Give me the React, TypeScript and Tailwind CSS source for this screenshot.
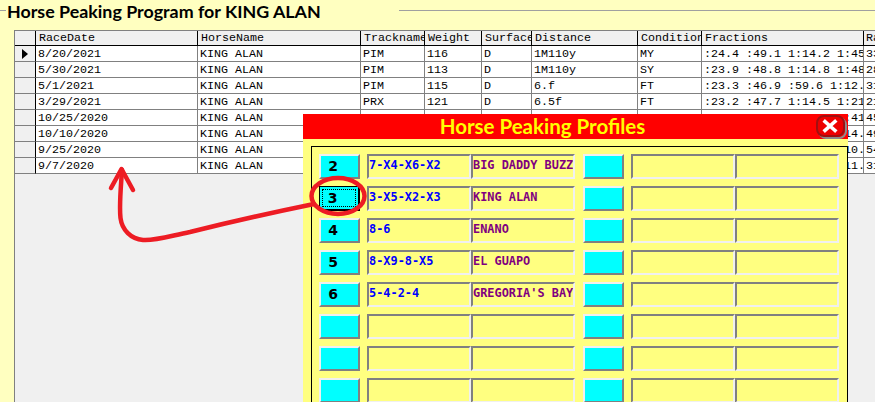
const columns = ["RaceDate", "HorseName", "Trackname", "Weight", "Surface", "Distance", "Condition", "Fractions", "Rating"];

const races = [
  ["8/20/2021", "KING ALAN", "PIM", "116", "D", "1M110y", "MY", ":24.4 :49.1 1:14.2 1:45", "33"],
  ["5/30/2021", "KING ALAN", "PIM", "113", "D", "1M110y", "SY", ":23.9 :48.8 1:14.8 1:48", "28"],
  ["5/1/2021", "KING ALAN", "PIM", "115", "D", "6.f", "FT", ":23.3 :46.9 :59.6 1:12.", "31"],
  ["3/29/2021", "KING ALAN", "PRX", "121", "D", "6.5f", "FT", ":23.2 :47.7 1:14.5 1:21", "21"],
  ["10/25/2020", "KING ALAN", "PIM", "118", "D", "1M", "FT", ":23.8 :47.6 1:12.4 1:41", "45"],
  ["10/10/2020", "KING ALAN", "LRL", "118", "D", "6.f", "FT", ":22.6 :46.1 :58.3 1:14.", "49"],
  ["9/25/2020", "KING ALAN", "LRL", "120", "D", "6.f", "FT", ":22.4 :45.9 :58.1 1:10.", "54"],
  ["9/7/2020", "KING ALAN", "PIM", "120", "D", "6.f", "FT", ":22.9 :46.4 :58.8 1:11.", "31"],
];

const profiles = [
  { num: "2", code: "7-X4-X6-X2", name: "BIG DADDY BUZZ" },
  { num: "3", code: "3-X5-X2-X3", name: "KING ALAN", focused: true },
  { num: "4", code: "8-6", name: "ENANO" },
  { num: "5", code: "8-X9-8-X5", name: "EL GUAPO" },
  { num: "6", code: "5-4-2-4", name: "GREGORIA'S BAY" },
  { num: "", code: "", name: "" },
  { num: "", code: "", name: "" },
  { num: "", code: "", name: "" },
];

const gridCols = "grid grid-cols-[21px_162px_163px_64px_57px_50px_106px_64px_162px_12px]";

function Field({ text, tone }: { text?: string; tone?: "code" | "name" }) {
  return (
    <div
      className={`h-[25px] w-[104px] overflow-hidden whitespace-nowrap border-2 border-t-[#808080] border-l-[#808080] border-r-[#f0f0f0] border-b-[#f0f0f0] bg-[#ffff80] pt-[2px] font-['DejaVu_Sans_Mono'] text-[11.900px] leading-[14px] font-bold ${
        tone === "name" ? "text-[#800080]" : "text-[#0000ff]"
      }`}
    >
      {text}
    </div>
  );
}

function ProfileButton({ label, focused }: { label?: string; focused?: boolean }) {
  if (focused) {
    return (
      <div className="flex h-[25px] w-[41px] items-center justify-center border border-black border-r-2 border-b-2 bg-[#00ffff] p-[2px]">
        <div className="flex h-full w-full items-center justify-center border border-dotted border-black pr-[13px] font-['DejaVu_Sans'] text-[14px] font-bold text-black">
          {label}
        </div>
      </div>
    );
  }
  return (
    <div className="flex h-[25px] w-[41px] items-center justify-center border-2 border-t-[#f0f0f0] border-l-[#f0f0f0] border-r-[#808080] border-b-[#808080] bg-[#00ffff] pr-[13px] font-['DejaVu_Sans'] text-[14px] font-bold text-black">
      {label}
    </div>
  );
}

function ProfilesDialog() {
  return (
    <div className="absolute left-[303px] top-[114px] h-[300px] w-[545px] bg-[#ffff80]">
      <div className="relative flex h-[25px] items-center justify-center bg-[#ff0000] pr-[66px] font-['Lato'] text-[20.500px] leading-[25px] font-bold text-[#ffff00]">
        Horse Peaking Profiles
        <svg className="absolute left-[512px] top-[0px]" width="32" height="25" viewBox="0 0 32 25">
          <rect x="4" y="4" width="27" height="20" rx="7" fill="none" stroke="#8c8c8c" strokeWidth="2" />
          <rect x="2" y="2" width="27" height="20" rx="7" fill="#ee0000" stroke="#a01010" strokeWidth="2" />
          <path d="M10 7.5 L20 16.5 M20 7.5 L10 16.5" stroke="#ffffff" strokeWidth="3.6" strokeLinecap="square" />
        </svg>
      </div>
      <div className="ml-[8px] mt-[7px] flex flex-col gap-[7px] border border-black pl-[7px] pt-[7px] pb-[7px]">
        {profiles.map((p, i) => (
          <div key={i} className="flex">
            <ProfileButton label={p.num} focused={p.focused} />
            <div className="ml-[7px] flex">
              <Field text={p.code} tone="code" />
              <Field text={p.name} tone="name" />
            </div>
            <div className="ml-[8px]">
              <ProfileButton />
            </div>
            <div className="ml-[7px] flex">
              <Field />
              <Field />
            </div>
          </div>
        ))}
      </div>
    </div>
  );
}

function Annotation() {
  return (
    <svg className="pointer-events-none absolute left-0 top-0" width="875" height="402" viewBox="0 0 875 402" fill="none">
      <path
        d="M314 204 C275 212 230 222 190 232 C170 236 155 241 143 240 C131 239 122 230 120.500 218 C119 205 121 186 122 170"
        stroke="#ed1c24"
        strokeWidth="4.500"
        strokeLinecap="round"
      />
      <path d="M111 188 L121.500 169 L133 190" stroke="#ed1c24" strokeWidth="4.500" strokeLinecap="round" strokeLinejoin="round" />
      <ellipse cx="338" cy="196" rx="26.500" ry="18" stroke="#ed1c24" strokeWidth="4.500" />
    </svg>
  );
}

export default function App() {
  return (
    <div className="relative flex h-[402px] w-[875px] flex-col overflow-hidden bg-[#ffffc0] font-['Liberation_Mono'] text-[11.670px] text-black">
      <div className="flex h-[30px] items-start">
        <div className="mt-[10px] h-px w-[6px] bg-[#a0a0a0]" />
        <div className="w-[393px] pl-[1px] pt-[1px] font-['Lato'] text-[17.850px] leading-[20px] font-bold whitespace-nowrap">
          Horse Peaking Program for KING ALAN
        </div>
        <div className="mt-[10px] h-px flex-1 bg-[#a0a0a0]" />
      </div>

      <div className="ml-[14px] flex-1 border-l border-t border-[#808080] bg-[#f0f0f0]">
        <div className={`${gridCols} h-[15px] border-b border-black leading-[15px]`}>
          <div className="border-r border-black" />
          {columns.map((c) => (
            <div key={c} className="overflow-hidden whitespace-nowrap border-r border-black pl-[3px] last:border-r-0 last:pl-[2px]">
              {c}
            </div>
          ))}
        </div>
        {races.map((row, i) => (
          <div key={i} className={`${gridCols} h-[16px] leading-[15px]`}>
            <div className="flex items-center border-r border-b border-r-black border-b-[#808080] pl-[7px]">
              {i === 0 && (
                <svg width="6" height="10" viewBox="0 0 6 10">
                  <path d="M0 0 L6 5 L0 10 Z" fill="#000000" />
                </svg>
              )}
            </div>
            {row.map((v, j) => (
              <div key={j} className="overflow-hidden whitespace-nowrap border-r border-b border-[#808080] bg-white pl-[2px] pt-[1px]">
                {v}
              </div>
            ))}
          </div>
        ))}
      </div>

      <ProfilesDialog />
      <Annotation />
    </div>
  );
}
